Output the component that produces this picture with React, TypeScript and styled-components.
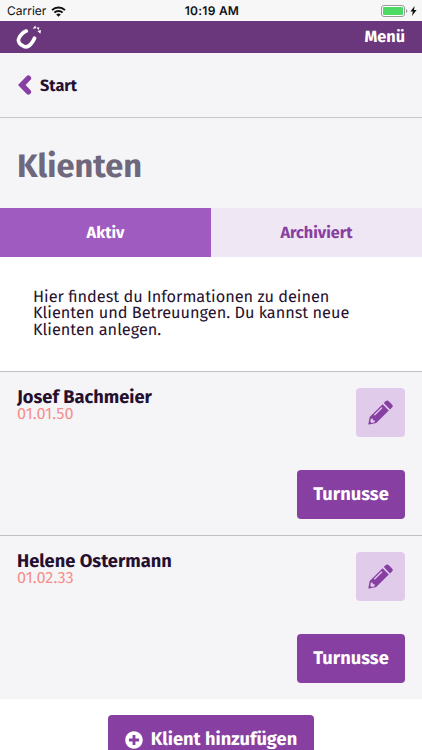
import React from 'react';
import styled, { createGlobalStyle } from 'styled-components';
import { FaPlusCircle } from 'react-icons/fa';

const clients = [
  { id: 1, name: 'Josef Bachmeier', birthday: '01.01.50' },
  { id: 2, name: 'Helene Ostermann', birthday: '01.02.33' },
];

const GlobalStyle = createGlobalStyle`
  * {
    box-sizing: border-box;
  }

  body {
    margin: 0;
    background: #fff;
    color: #26102f;
    font-family: 'Fira Sans', 'Noto Sans', sans-serif;
    text-rendering: geometricPrecision;
  }

  button {
    border: 0;
    padding: 0;
    font-family: inherit;
    text-rendering: inherit;
  }
`;

const Screen = styled.div`
  width: 100%;
  height: 750px;
  overflow: hidden;
`;

const StatusBar = styled.div`
  display: grid;
  grid-template-columns: 1fr auto 1fr;
  align-items: center;
  height: 21px;
  padding: 1px 5px 0 7px;
  background: #f7f7f8;
  color: #111;
  font: 12px/20px Inter, sans-serif;
`;

const Carrier = styled.div`
  display: flex;
  align-items: center;
  gap: 5px;
`;

const Time = styled.div`
  font-weight: 600;
  letter-spacing: 0.25px;
`;

const Power = styled.div`
  display: flex;
  align-items: center;
  justify-content: flex-end;
  gap: 2px;
`;

const Header = styled.header`
  display: flex;
  align-items: center;
  justify-content: space-between;
  height: 32px;
  padding: 0 17px 0 16px;
  background: #6a367c;
`;

const MenuButton = styled.button`
  padding-top: 2px;
  background: none;
  color: #fff;
  font-size: 16.3px;
  font-weight: 700;
  line-height: 30px;
`;

const BackBar = styled.nav`
  display: flex;
  align-items: center;
  gap: 8px;
  height: 65px;
  padding: 0 18px;
  background: #f5f5f8;
  border-bottom: 1px solid #c5c8cd;
  font-size: 16.3px;
  font-weight: 700;

  span {
    padding-top: 2px;
  }
`;

const TitleBar = styled.div`
  height: 90px;
  padding: 27px 17px 0;
  background: #f5f5f8;
`;

const Title = styled.h1`
  margin: 0;
  color: #6f677c;
  font-size: 32.6px;
  font-weight: 700;
  line-height: 44px;
`;

const Tabs = styled.div`
  display: flex;
  height: 49px;
`;

const Tab = styled.button<{ $active?: boolean }>`
  flex: 1;
  padding-top: 2px;
  background: ${({ $active }) => ($active ? '#9f5bbf' : '#f0e7f5')};
  color: ${({ $active }) => ($active ? '#fff' : '#8740a2')};
  font-size: 16.3px;
  font-weight: 700;
`;

const Intro = styled.p`
  height: 114px;
  margin: 0;
  padding: 33px 33px 0;
  font-size: 16.3px;
  line-height: 16.3px;
`;

const Card = styled.article`
  display: flex;
  justify-content: space-between;
  height: 164px;
  padding: 16px 17px;
  background: #f5f5f8;
  border-top: 1px solid #bfc0c6;
`;

const Name = styled.h2`
  margin: 0;
  font-size: 18.3px;
  font-weight: 700;
  line-height: 18px;
`;

const Birthday = styled.div`
  padding-top: 1px;
  color: #f58f8c;
  font-size: 16.3px;
  line-height: 16px;
`;

const Actions = styled.div`
  display: flex;
  flex-direction: column;
  align-items: flex-end;
  gap: 33px;
`;

const EditButton = styled.button`
  display: flex;
  align-items: center;
  justify-content: center;
  width: 49px;
  height: 49px;
  border-radius: 4px;
  background: #e1cbeb;
  color: #8740a2;
`;

const PrimaryButton = styled.button<{ $width: number }>`
  display: flex;
  align-items: center;
  justify-content: center;
  gap: 8px;
  width: ${({ $width }) => $width}px;
  height: 49px;
  border-radius: 4px;
  background: #8740a2;
  color: #fff;
  font-size: 18.3px;
  font-weight: 700;

  span {
    padding-bottom: 2px;
  }
`;

const Footer = styled.footer`
  display: flex;
  justify-content: center;
  padding-top: 16px;
`;

function WifiIcon() {
  return (
    <svg width="15" height="11" viewBox="0 0 15 11" fill="none" stroke="#111" strokeWidth="2">
      <path d="M1 4.1a9.3 9.3 0 0 1 13 0" />
      <path d="M3.4 6.6a5.8 5.8 0 0 1 8.2 0" />
      <path d="M7.5 10.8 5.2 8.5a3.3 3.3 0 0 1 4.6 0z" fill="#111" stroke="none" />
    </svg>
  );
}

function BatteryIcon() {
  return (
    <svg width="27" height="12" viewBox="0 0 27 12">
      <rect x="0.5" y="0.5" width="23" height="11" rx="2.5" fill="#fff" stroke="#9a9a9c" />
      <rect x="2" y="2" width="20" height="8" rx="1" fill="#4cd964" />
      <path d="M25 4v4q1.3-.6 1.3-2T25 4z" fill="#9a9a9c" />
    </svg>
  );
}

function BoltIcon() {
  return (
    <svg width="7" height="10" viewBox="0 0 7 10">
      <path d="M4.6 0 .4 5.6h2.4L2 10l4.6-5.9H4z" fill="#111" />
    </svg>
  );
}

function Logo() {
  return (
    <svg width="26" height="26" viewBox="0 0 26 26" fill="none">
      <path
        d="M10.2 7.1C6.5 8.5 3 12.4 2.5 15.5c-.4 2.7 2.2 5.3 5 6.7 2.8 1.3 5.7 0 7.7-2.6 1.4-1.7 2.5-3.5 3.3-5.4"
        stroke="#fff"
        strokeWidth="3.7"
        strokeLinecap="round"
      />
      <path d="m16.7 4.7 2.5-3.3 1 2.9zM20.4 3.4l3.1.1-.9 2.4zM21.4 7l3.6-.9-.6 3.6z" fill="#fff" />
    </svg>
  );
}

function BackIcon() {
  return (
    <svg width="14" height="20" viewBox="0 0 14 20" fill="none">
      <path
        d="M10.4 3.2 3.8 10l6.6 6.8"
        stroke="#8740a2"
        strokeWidth="5.4"
        strokeLinecap="round"
        strokeLinejoin="miter"
      />
    </svg>
  );
}

function PencilIcon() {
  return (
    <svg width="25" height="25" viewBox="0 0 25 25" fill="currentColor">
      <path d="m15.8 3 1.9-1.9q1.4-1.4 2.9 0L24 4.5q1.5 1.4 0 2.9l-2 2z" />
      <path
        fillRule="evenodd"
        d="m14.6 4.2 6.2 6.3L8.2 23.1 1.3 24.6Q.3 24.7.4 23.7l1.3-6.8zM13.2 7.5 6.3 14.2q-.5.6-.1 1 .4.4 1 0l6.9-6.7q.5-.6.1-1t-1 0zM2.8 18.7l-.5 3.1 1.2 1.1 3.2-.7v-1.9H4.8v-1.9z"
      />
    </svg>
  );
}

export default function App() {
  return (
    <Screen>
      <GlobalStyle />
      <StatusBar>
        <Carrier>
          Carrier
          <WifiIcon />
        </Carrier>
        <Time>10:19 AM</Time>
        <Power>
          <BatteryIcon />
          <BoltIcon />
        </Power>
      </StatusBar>

      <Header>
        <Logo />
        <MenuButton>Menü</MenuButton>
      </Header>

      <BackBar>
        <BackIcon />
        <span>Start</span>
      </BackBar>

      <TitleBar>
        <Title>Klienten</Title>
      </TitleBar>

      <Tabs>
        <Tab $active>Aktiv</Tab>
        <Tab>Archiviert</Tab>
      </Tabs>

      <Intro>
        Hier findest du Informationen zu deinen
        <br />
        Klienten und Betreuungen. Du kannst neue
        <br />
        Klienten anlegen.
      </Intro>

      {clients.map((client) => (
        <Card key={client.id}>
          <div>
            <Name>{client.name}</Name>
            <Birthday>{client.birthday}</Birthday>
          </div>
          <Actions>
            <EditButton aria-label="Bearbeiten">
              <PencilIcon />
            </EditButton>
            <PrimaryButton $width={108}>
              <span>Turnusse</span>
            </PrimaryButton>
          </Actions>
        </Card>
      ))}

      <Footer>
        <PrimaryButton $width={206}>
          <FaPlusCircle size={18} />
          <span>Klient hinzufügen</span>
        </PrimaryButton>
      </Footer>
    </Screen>
  );
}
